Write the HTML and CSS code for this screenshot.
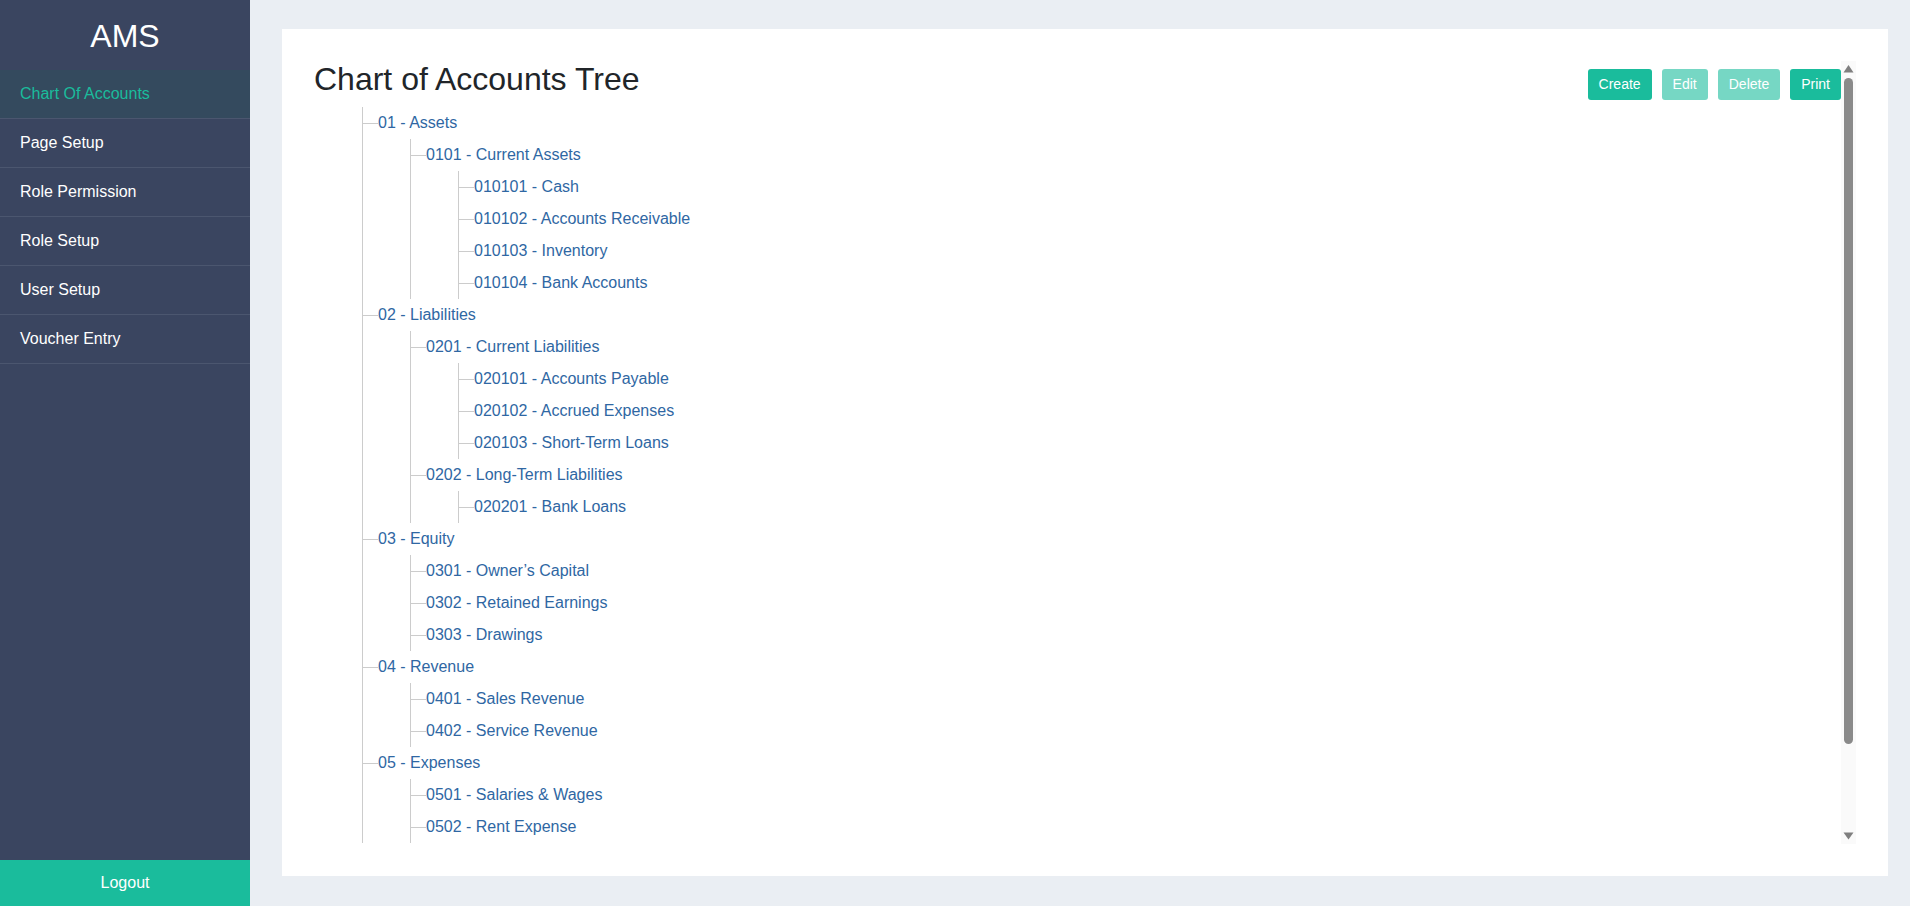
FILE: index.html
```html
<!DOCTYPE html>
<html lang="en">
<head>
<meta charset="utf-8">
<title>AMS - Chart of Accounts</title>
<link rel="stylesheet" href="styles.css">
</head>
<body>
<div class="app">
  <aside class="sidebar">
    <div class="brand">AMS</div>
    <nav class="nav">
      <a class="nav-item active" href="#">Chart Of Accounts</a>
      <a class="nav-item" href="#">Page Setup</a>
      <a class="nav-item" href="#">Role Permission</a>
      <a class="nav-item" href="#">Role Setup</a>
      <a class="nav-item" href="#">User Setup</a>
      <a class="nav-item" href="#">Voucher Entry</a>
    </nav>
    <a class="logout" href="#">Logout</a>
  </aside>
  <main class="main">
    <section class="card">
      <div class="viewport">
        <div class="content">
          <div class="header">
            <h1 class="title">Chart of Accounts Tree</h1>
            <div class="actions">
              <button class="btn">Create</button>
              <button class="btn disabled">Edit</button>
              <button class="btn disabled">Delete</button>
              <button class="btn">Print</button>
            </div>
          </div>
          <ul class="tree root">
            <li><span class="node">01 - Assets</span>
              <ul class="tree">
                <li><span class="node">0101 - Current Assets</span>
                  <ul class="tree">
                    <li><span class="node">010101 - Cash</span></li>
                    <li><span class="node">010102 - Accounts Receivable</span></li>
                    <li><span class="node">010103 - Inventory</span></li>
                    <li><span class="node">010104 - Bank Accounts</span></li>
                  </ul>
                </li>
              </ul>
            </li>
            <li><span class="node">02 - Liabilities</span>
              <ul class="tree">
                <li><span class="node">0201 - Current Liabilities</span>
                  <ul class="tree">
                    <li><span class="node">020101 - Accounts Payable</span></li>
                    <li><span class="node">020102 - Accrued Expenses</span></li>
                    <li><span class="node">020103 - Short-Term Loans</span></li>
                  </ul>
                </li>
                <li><span class="node">0202 - Long-Term Liabilities</span>
                  <ul class="tree">
                    <li><span class="node">020201 - Bank Loans</span></li>
                  </ul>
                </li>
              </ul>
            </li>
            <li><span class="node">03 - Equity</span>
              <ul class="tree">
                <li><span class="node">0301 - Owner’s Capital</span></li>
                <li><span class="node">0302 - Retained Earnings</span></li>
                <li><span class="node">0303 - Drawings</span></li>
              </ul>
            </li>
            <li><span class="node">04 - Revenue</span>
              <ul class="tree">
                <li><span class="node">0401 - Sales Revenue</span></li>
                <li><span class="node">0402 - Service Revenue</span></li>
              </ul>
            </li>
            <li><span class="node">05 - Expenses</span>
              <ul class="tree">
                <li><span class="node">0501 - Salaries &amp; Wages</span></li>
                <li><span class="node">0502 - Rent Expense</span></li>
              </ul>
            </li>
          </ul>
        </div>
        <div class="scrollbar" aria-hidden="true">
          <div class="sb-btn">
            <svg width="15" height="15" viewBox="0 0 15 15"><path d="M2.5 11.5h10L7.5 4z" fill="#7f7f7f"/></svg>
          </div>
          <div class="sb-track">
            <div class="sb-thumb"></div>
          </div>
          <div class="sb-btn">
            <svg width="15" height="15" viewBox="0 0 15 15"><path d="M2.5 3.5h10l-5 7z" fill="#7f7f7f"/></svg>
          </div>
        </div>
      </div>
    </section>
  </main>
</div>
</body>
</html>
```

FILE: styles.css
```css
* { box-sizing: border-box; }

html, body {
  margin: 0;
  padding: 0;
  height: 100%;
}

body {
  font-family: "Liberation Sans", Arial, sans-serif;
  font-size: 16px;
  background: #eaeef3;
  overflow: hidden;
}

.app {
  display: flex;
  height: 100vh;
}

.sidebar {
  width: 250px;
  flex: 0 0 250px;
  background: #3a4560;
  display: flex;
  flex-direction: column;
}

.brand {
  height: 70px;
  padding-top: 18px;
  line-height: 37px;
  font-size: 32px;
  color: #ffffff;
  text-align: center;
}

.nav {
  flex: 1;
  display: flex;
  flex-direction: column;
}

.nav-item {
  display: block;
  height: 49px;
  line-height: 48px;
  padding-left: 20px;
  color: #ffffff;
  text-decoration: none;
  border-bottom: 1px solid #4b566f;
}

.nav-item.active {
  background: #344a5e;
  color: #1abc9c;
}

.logout {
  display: block;
  height: 46px;
  line-height: 46px;
  text-align: center;
  background: #1abc9c;
  color: #ffffff;
  text-decoration: none;
}

.main {
  flex: 1;
  padding: 29px 22px 30px 32px;
  display: flex;
}

.card {
  flex: 1;
  background: #ffffff;
  padding: 32px;
  display: flex;
  min-height: 0;
}

.viewport {
  flex: 1;
  display: flex;
  min-height: 0;
}

.content {
  flex: 1;
  min-width: 0;
  overflow: hidden;
}

.scrollbar {
  width: 15px;
  flex: 0 0 15px;
  display: flex;
  flex-direction: column;
  background: #fafafa;
}

.sb-btn {
  height: 15px;
  flex: 0 0 15px;
}

.sb-btn svg {
  display: block;
}

.sb-track {
  flex: 1;
  padding-top: 2px;
  display: flex;
  justify-content: center;
}

.sb-thumb {
  width: 9px;
  height: 666px;
  border-radius: 5px;
  background: #8a8a8a;
}

.header {
  display: flex;
  justify-content: space-between;
  align-items: flex-start;
  height: 46px;
}

.title {
  margin: 0;
  font-size: 32px;
  font-weight: normal;
  line-height: 36.8px;
  color: #212529;
}

.actions {
  display: flex;
  gap: 10px;
  margin-top: 8px;
}

.btn {
  font-family: "Liberation Sans", Arial, sans-serif;
  font-size: 14px;
  height: 31px;
  line-height: 31px;
  padding: 0 11px;
  border: none;
  border-radius: 3px;
  background: #1abc9c;
  color: #ffffff;
  cursor: pointer;
}

.btn.disabled {
  background: #76d7c4;
  cursor: default;
}

.tree {
  list-style: none;
  margin: 0 0 0 47px;
  padding: 0;
  border-left: 1px solid #cccccc;
}

.tree.root {
  margin-left: 48px;
}

.node {
  display: block;
  position: relative;
  height: 32px;
  line-height: 32px;
  padding-left: 15px;
  color: #2f67a3;
  white-space: nowrap;
}

.node::before {
  content: "";
  position: absolute;
  left: 0;
  top: 16px;
  width: 15px;
  border-top: 1px solid #cccccc;
}
```
